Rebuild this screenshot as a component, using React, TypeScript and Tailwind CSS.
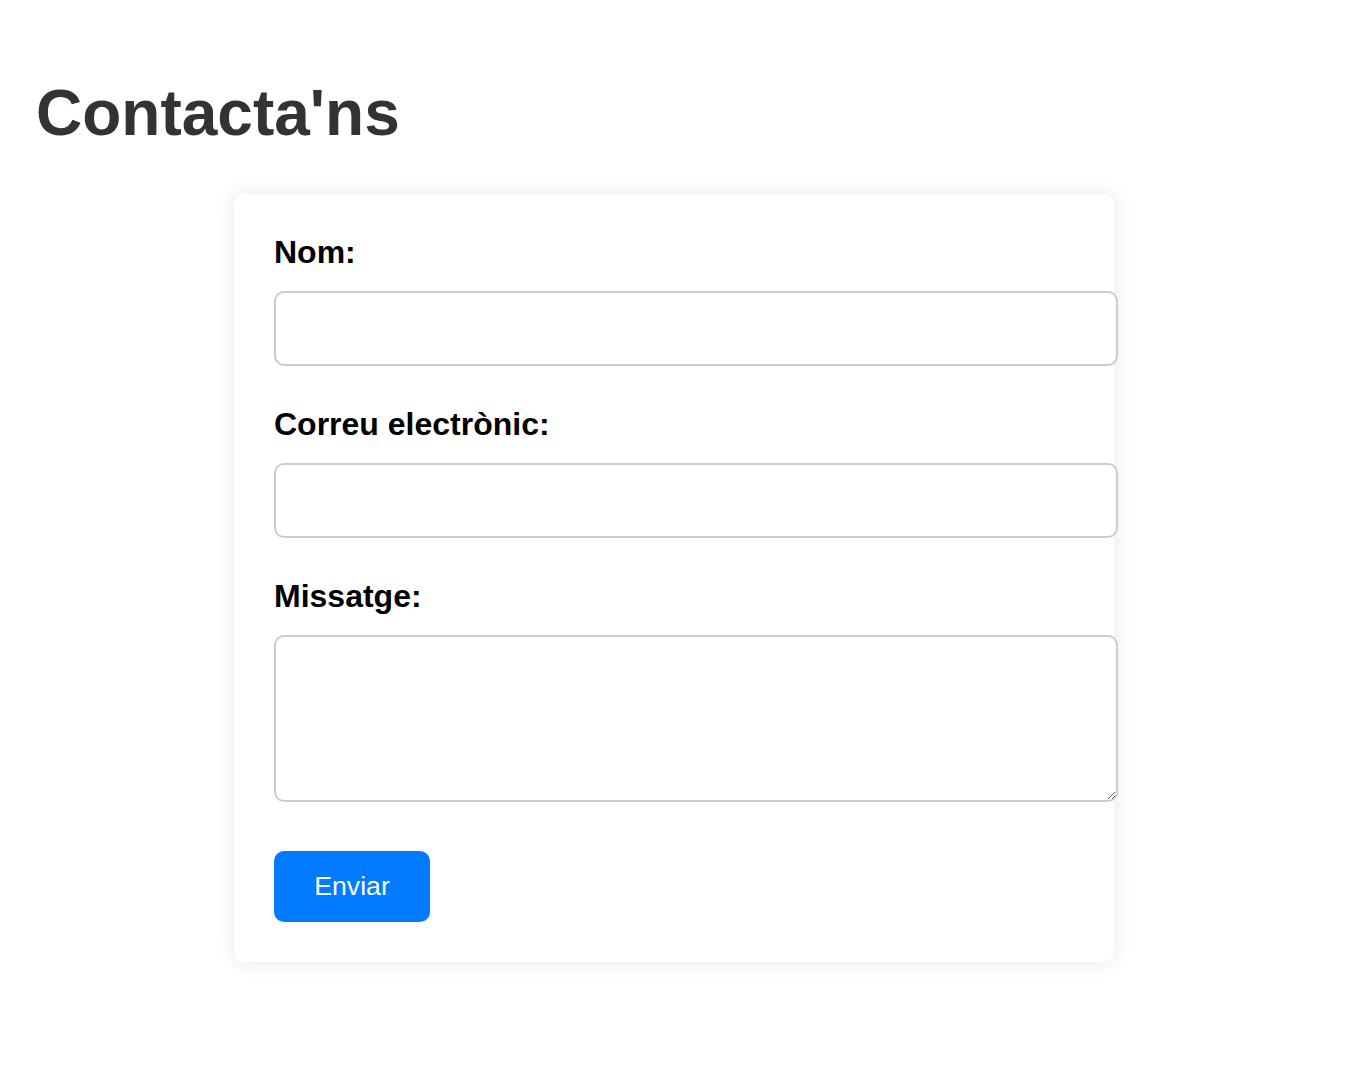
export default function App() {
  return (
    <div className="min-h-screen bg-white px-[36px] pt-[76px] font-['Liberation_Sans',Arial,sans-serif]">
      <h1 className="mb-[44px] text-[64px] font-bold leading-[74px] text-[#333]">Contacta'ns</h1>

      <form
        className="ml-[198px] w-[880px] rounded-[10px] bg-white p-[40px] shadow-[0_0_20px_rgba(0,0,0,0.1)]"
        onSubmit={(e) => e.preventDefault()}
      >
        <label htmlFor="nom" className="mb-[20px] block text-[32px] font-bold leading-[37px] text-black">
          Nom:
        </label>
        <input
          id="nom"
          type="text"
          className="block h-[75px] w-[844px] rounded-[10px] border-2 border-[#ccc] bg-white px-[20px] text-[26.67px] outline-none"
        />

        <label htmlFor="email" className="mb-[20px] mt-[40px] block text-[32px] font-bold leading-[37px] text-black">
          Correu electrònic:
        </label>
        <input
          id="email"
          type="email"
          className="block h-[75px] w-[844px] rounded-[10px] border-2 border-[#ccc] bg-white px-[20px] text-[26.67px] outline-none"
        />

        <label htmlFor="missatge" className="mb-[20px] mt-[40px] block text-[32px] font-bold leading-[37px] text-black">
          Missatge:
        </label>
        <textarea
          id="missatge"
          className="block h-[167px] w-[844px] rounded-[10px] border-2 border-[#ccc] bg-white p-[20px] text-[26.67px] outline-none"
        />

        <button
          type="submit"
          className="mt-[49px] block h-[71px] w-[156px] rounded-[10px] bg-[#007bff] text-[26.67px] leading-[31px] text-white"
        >
          Enviar
        </button>
      </form>
    </div>
  );
}
